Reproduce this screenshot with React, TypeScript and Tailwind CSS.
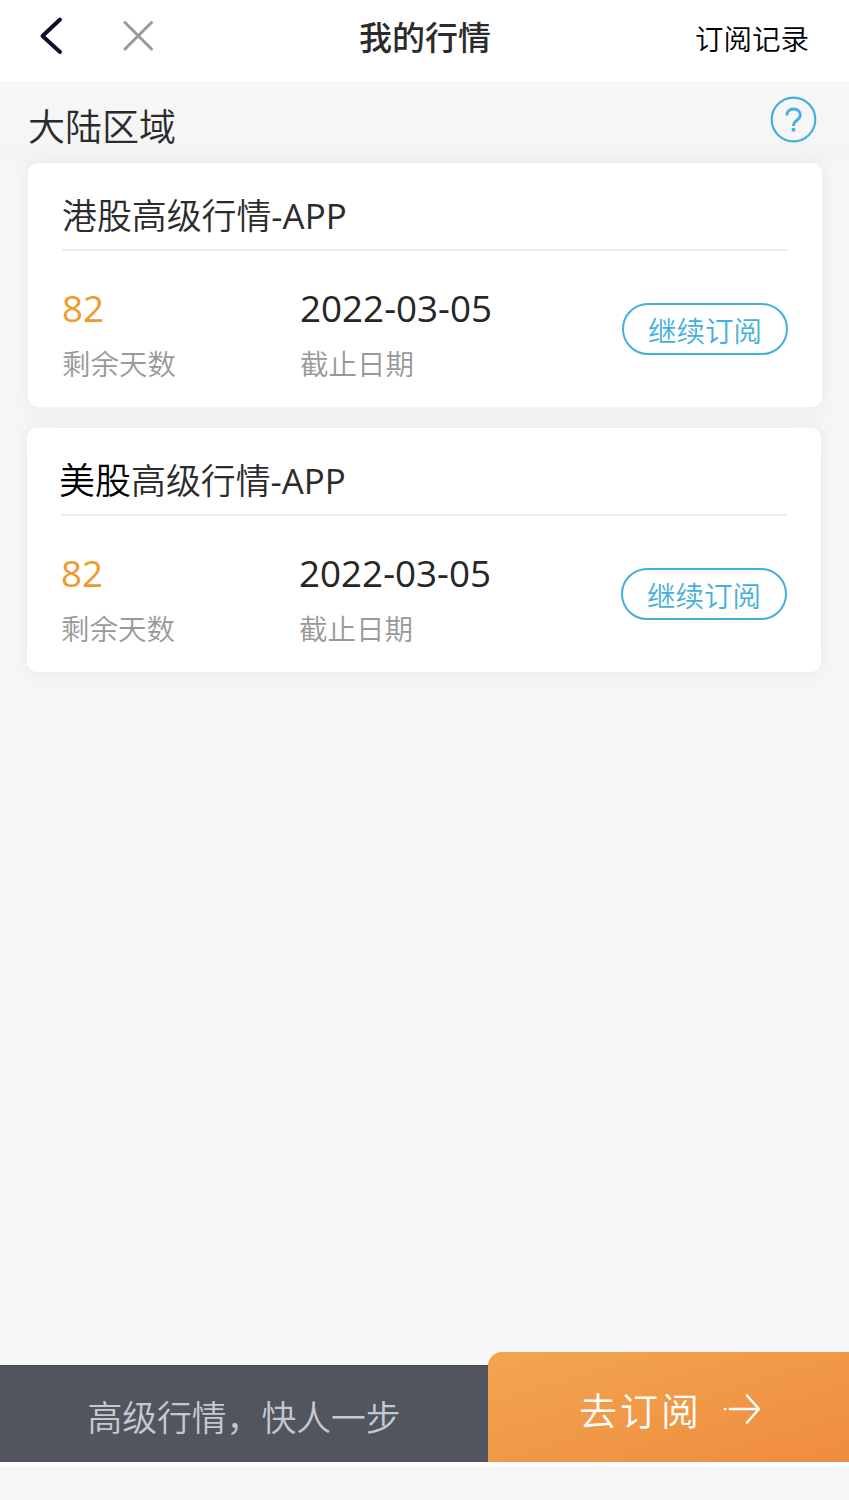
import clsx from "clsx";

const quotes = [
  { id: 1, head: "港股", name: "高级行情-APP", days: 82, endDate: "2022-03-05", isNew: false },
  { id: 2, head: "美股", name: "高级行情-APP", days: 82, endDate: "2022-03-05", isNew: true },
];

function Header() {
  return (
    <header className="relative flex h-[81px] items-start justify-between bg-white">
      <div className="flex pt-[16px] pl-[38px]">
        <svg className="cursor-pointer" width="26" height="40" viewBox="0 0 26 40" fill="none">
          <path d="M22 3.5L4.500 20L22 36" stroke="#100e2c" strokeWidth="4" strokeLinecap="round" strokeLinejoin="round" />
        </svg>
        <svg className="ml-[58px] cursor-pointer" width="32" height="40" viewBox="0 0 32 40" fill="none">
          <path d="M3 6.500L29.500 33M29.500 6.500L3 33" stroke="#999" strokeWidth="3" strokeLinecap="round" />
        </svg>
      </div>
      <h1 className="absolute top-[16px] left-[359px] font-['Noto_Sans_CJK_SC',sans-serif] text-[33px] leading-[40px] font-medium whitespace-nowrap text-[#2b2b2b]">
        我的行情
      </h1>
      <a className="mt-[19px] mr-[40px] cursor-pointer text-[28.5px] leading-[40px] text-black">订阅记录</a>
    </header>
  );
}

function QuoteCard({ head, name, days, endDate, isNew }) {
  return (
    <div
      className={clsx(
        "h-[244px] w-[794px] rounded-[10px] bg-white px-[34px] shadow-[0_0_16px_4px_rgba(232,232,240,0.65)]",
        isNew ? "ml-[27px]" : "ml-[28px]"
      )}
    >
      <div className="h-[88px] border-b-2 border-[#ececee] pt-[33px] text-[34.9px] leading-[40px] whitespace-nowrap text-[#2b2b2b]">
        <span className={isNew ? "-ml-[2px] text-[36px] text-black" : ""}>{head}</span>
        {name}
      </div>
      <div className="flex pt-[37px]">
        <div className="w-[238px]">
          <p className="text-[36.8px] leading-[40px] text-[#f09a2c]">{days}</p>
          <p className="mt-[16px] text-[28.5px] leading-[40px] text-[#999]">剩余天数</p>
        </div>
        <div className="flex-1">
          <p className="text-[36.8px] leading-[40px] text-[#262626]">{endDate}</p>
          <p className="mt-[16px] text-[28.5px] leading-[40px] text-[#999]">截止日期</p>
        </div>
        <button className="mt-[15px] flex h-[52px] w-[166px] cursor-pointer items-center justify-center rounded-[26px] border-2 border-[#45afdb] pt-[4px] text-[28.5px] text-[#45afdb]">
          继续订阅
        </button>
      </div>
    </div>
  );
}

export default function App() {
  return (
    <div className="flex h-[1500px] w-[849px] flex-col overflow-hidden bg-[#f7f7f7] font-['Open_Sans','Noto_Sans_CJK_SC_DemiLight','Noto_Sans_CJK_SC',sans-serif]">
      <Header />
      <div className="flex h-[82px] justify-between bg-linear-to-b from-[#f7f7f7] to-[#f5f5f6] pr-[32px] pl-[28px]">
        <h2 className="pt-[26px] text-[37px] leading-[40px] text-[#2b2b2b]">大陆区域</h2>
        <svg className="mt-[15px] cursor-pointer" width="47" height="47" viewBox="0 0 47 47" fill="none" stroke="#45afdb">
          <circle cx="23.500" cy="23.500" r="21.800" strokeWidth="2.200" />
          <path d="M16.800 19.500C16.800 15.500 19.500 13 23.500 13C27.500 13 30.300 15.500 30.300 19C30.300 24.500 23.500 24 23.500 30" strokeWidth="2.800" />
          <circle cx="23.500" cy="33.800" r="2" fill="#45afdb" stroke="none" />
        </svg>
      </div>
      <main className="flex flex-1 flex-col gap-[21px]">
        {quotes.map((item) => (
          <QuoteCard key={item.id} {...item} />
        ))}
      </main>
      <footer className="flex h-[115px] items-end border-b-[5px] border-white">
        <div className="flex h-[97px] w-[488px] items-center justify-center border-t border-[#42454c] bg-[#51555d] pt-[8px] text-[34.8px] text-[#c5c8d3]">
          高级行情，快人一步
        </div>
        {/* subscribe */}
        <button className="flex h-[110px] flex-1 cursor-pointer items-center rounded-tl-[14px] bg-linear-to-br from-[#f2a54f] to-[#ef8c3f] pt-[4px] pl-[91px] text-[38px] tracking-[3px] text-white">
          <span className="pt-[2px]">去订阅</span>
          <svg className="ml-[20px]" width="40" height="32" viewBox="0 0 40 32" fill="none" stroke="white" strokeWidth="2.600" strokeLinecap="round" strokeLinejoin="round">
            <path d="M3 16H3.200M8 16H37M25 2.500L37 16L25 29.500" />
          </svg>
        </button>
      </footer>
      <div className="h-[33px] bg-[#f7f7f7]" />
    </div>
  );
}
